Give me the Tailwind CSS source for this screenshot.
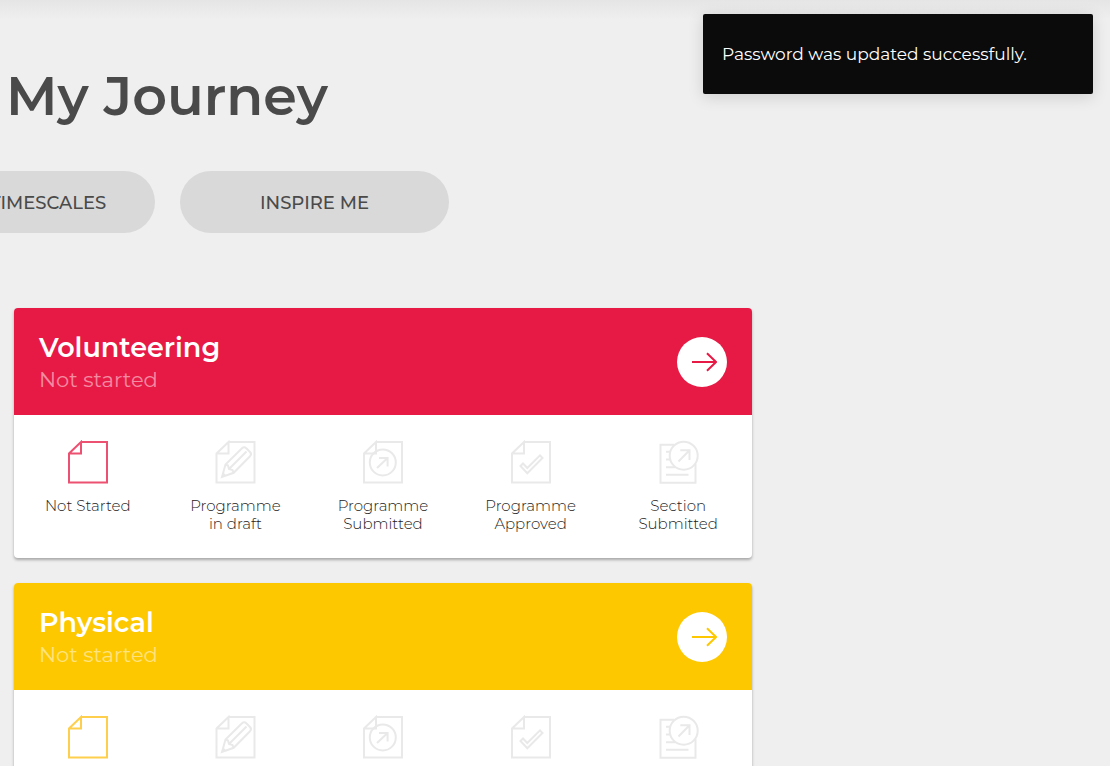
<!DOCTYPE html>
<html lang="en">
  <head>
    <meta charset="UTF-8" />
    <meta name="viewport" content="width=device-width, initial-scale=1.0" />
    <title>My Journey</title>
    <script src="https://cdn.jsdelivr.net/npm/@tailwindcss/browser@4"></script>
  </head>
  <body
    class="relative min-h-screen overflow-x-hidden bg-[#efefef] font-['Montserrat','Inter',sans-serif] text-[#4a4a4a]"
  >
    <!-- Shared icons -->
    <svg class="hidden" fill="none" stroke-linejoin="round">
      <symbol id="page" viewBox="0 0 42 44">
        <path d="M14 2H40V42.5H2V13.5L14 2V13.5H2" />
      </symbol>
      <symbol id="draft" viewBox="0 0 42 44">
        <path d="M14.5 2H40.5V42.5H2.5V13.5L14.5 2V13.5H2.5" />
        <path
          d="M8 37L11.5 24.5L28 8.2Q30.2 6.2 32.3 8.2L36 12Q38 14 36 16.2L19.7 32.8ZM11.5 24.5L14 25.5L15 29L18.5 30L19.7 32.8M15 29L32.5 11.5M9 33.5L11.5 36"
        />
      </symbol>
      <symbol id="submitted" viewBox="0 0 42 44">
        <path d="M14 2H40V42.5H2V13.5L14 2V13.5H2" />
        <circle cx="20.8" cy="22.4" r="13" />
        <path d="M15 28L25.6 18M17 18H25.6V26.5" />
      </symbol>
      <symbol id="approved" viewBox="0 0 42 44">
        <path d="M14 2H40V42.5H2V13.5L14 2V13.5H2" />
        <path d="M10.5 26L13 23.5L17.3 28L30 15.4L32.5 18L17.3 33.2Z" />
      </symbol>
      <symbol id="section" viewBox="0 0 42 44">
        <path
          d="M17 4.8H3.5V42.7H38.5V24M9 11.7H13M9 19.5H13.5M9 27.3H18M9 34.7H31.5"
        />
        <circle cx="26.7" cy="15.7" r="14" />
        <path d="M21.5 21.5L32.5 10.3M23.3 10.3H32.5V20" />
      </symbol>
      <symbol id="arrow" viewBox="0 0 26 20">
        <path stroke-linejoin="miter" d="M1 10H25M16 1.2L25 10L16 18.8" />
      </symbol>
    </svg>

    <div class="h-5 bg-linear-to-b from-[#e5e5e5] to-[#efefef]"></div>

    <!-- Notification -->
    <div
      role="status"
      class="absolute top-[14px] right-[17px] flex h-20 w-[390px] items-center rounded-xs bg-[#0b0b0b] px-[19px] pt-px text-[17px] text-white shadow-[0_3px_16px_rgba(0,0,0,0.14)]"
    >
      Password was updated successfully.
    </div>

    <main>
      <h1 class="mt-10 ml-1.5 text-[54px] leading-[72px] font-semibold">
        My Journey
      </h1>

      <div class="mt-[39px] -ml-[114px] flex gap-[25px] text-lg font-medium">
        <button class="h-[62px] w-[269px] rounded-full bg-[#d9d9d9] pt-0.5">
          VIEW TIMESCALES
        </button>
        <button class="h-[62px] w-[269px] rounded-full bg-[#d9d9d9] pt-0.5">
          INSPIRE ME
        </button>
      </div>

      <div class="mt-[75px] ml-[14px] flex max-w-[738px] flex-col gap-[25px]">
        <section
          class="overflow-hidden rounded bg-white shadow-[0_2px_3px_rgba(0,0,0,0.3)]"
        >
          <header
            class="flex items-center justify-between bg-[#e71945] px-[25px] text-white"
          >
            <div class="pt-6 pb-[19px]">
              <h2 class="text-[27px] leading-8 font-semibold">Volunteering</h2>
              <p class="text-[21px] leading-8 text-white/50">Not started</p>
            </div>
            <a
              href="#"
              aria-label="Open Volunteering"
              class="flex size-[50px] items-center justify-center rounded-full bg-white pl-1 text-[#e71945]"
            >
              <svg class="h-5 w-[26px] fill-none stroke-current stroke-2"><use href="#arrow" /></svg>
            </a>
          </header>
          <ol
            class="grid grid-cols-5 pt-[25px] pb-[25px] text-center text-[15px] leading-[18px] font-light text-[#222]"
          >
            <li class="flex flex-col items-center gap-[13px]">
              <svg class="h-11 w-[42px] fill-none stroke-[#ec5172] stroke-2"><use href="#page" /></svg>
              <span>Not Started</span>
            </li>
            <li class="flex flex-col items-center gap-[13px]">
              <svg class="h-11 w-[42px] fill-none stroke-[#e9e9e9] stroke-2"><use href="#draft" /></svg>
              <span>Programme<br />in draft</span>
            </li>
            <li class="flex flex-col items-center gap-[13px]">
              <svg class="h-11 w-[42px] fill-none stroke-[#e9e9e9] stroke-2"><use href="#submitted" /></svg>
              <span>Programme<br />Submitted</span>
            </li>
            <li class="flex flex-col items-center gap-[13px]">
              <svg class="h-11 w-[42px] fill-none stroke-[#e9e9e9] stroke-2"><use href="#approved" /></svg>
              <span>Programme<br />Approved</span>
            </li>
            <li class="flex flex-col items-center gap-[13px]">
              <svg class="h-11 w-[42px] fill-none stroke-[#e9e9e9] stroke-2"><use href="#section" /></svg>
              <span>Section<br />Submitted</span>
            </li>
          </ol>
        </section>

        <section
          class="overflow-hidden rounded bg-white shadow-[0_2px_3px_rgba(0,0,0,0.3)]"
        >
          <header
            class="flex items-center justify-between bg-[#fdc800] px-[25px] text-white"
          >
            <div class="pt-6 pb-[19px]">
              <h2 class="text-[27px] leading-8 font-semibold">Physical</h2>
              <p class="text-[21px] leading-8 text-white/50">Not started</p>
            </div>
            <a
              href="#"
              aria-label="Open Physical"
              class="flex size-[50px] items-center justify-center rounded-full bg-white pl-1 text-[#fdc800]"
            >
              <svg class="h-5 w-[26px] fill-none stroke-current stroke-2"><use href="#arrow" /></svg>
            </a>
          </header>
          <ol
            class="grid grid-cols-5 pt-[25px] pb-[25px] text-center text-[15px] leading-[18px] font-light text-[#222]"
          >
            <li class="flex flex-col items-center gap-[13px]">
              <svg class="h-11 w-[42px] fill-none stroke-[#fdcf4d] stroke-2"><use href="#page" /></svg>
              <span>Not Started</span>
            </li>
            <li class="flex flex-col items-center gap-[13px]">
              <svg class="h-11 w-[42px] fill-none stroke-[#e9e9e9] stroke-2"><use href="#draft" /></svg>
              <span>Programme<br />in draft</span>
            </li>
            <li class="flex flex-col items-center gap-[13px]">
              <svg class="h-11 w-[42px] fill-none stroke-[#e9e9e9] stroke-2"><use href="#submitted" /></svg>
              <span>Programme<br />Submitted</span>
            </li>
            <li class="flex flex-col items-center gap-[13px]">
              <svg class="h-11 w-[42px] fill-none stroke-[#e9e9e9] stroke-2"><use href="#approved" /></svg>
              <span>Programme<br />Approved</span>
            </li>
            <li class="flex flex-col items-center gap-[13px]">
              <svg class="h-11 w-[42px] fill-none stroke-[#e9e9e9] stroke-2"><use href="#section" /></svg>
              <span>Section<br />Submitted</span>
            </li>
          </ol>
        </section>
      </div>
    </main>
  </body>
</html>
